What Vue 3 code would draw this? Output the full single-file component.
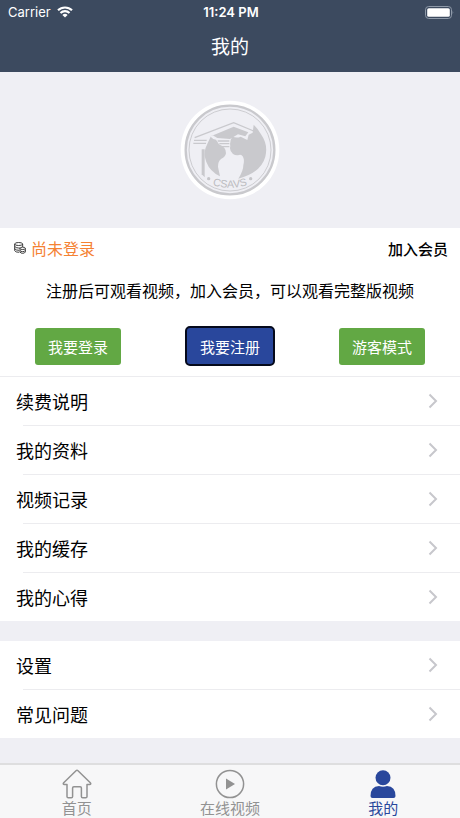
<script setup>
    import { ref } from 'vue'

    const accountItems = ['续费说明', '我的资料', '视频记录', '我的缓存', '我的心得']
    const systemItems = ['设置', '常见问题']
    const groups = [accountItems, systemItems]

    const tabs = [
        { id: 'home', label: '首页' },
        { id: 'video', label: '在线视频' },
        { id: 'mine', label: '我的' }
    ]
    const activeTab = ref('mine')
</script>

<template>
    <div class="page">
        <header class="header">
            <div class="status">
                <span class="carrier">
                    Carrier
                    <svg class="wifi" viewBox="0 0 16 12" aria-hidden="true">
                        <path d="M1 4.3a10 10 0 0 1 14 0M3.5 7a6.400 6.400 0 0 1 9 0" fill="none" stroke="#fff" stroke-width="2.100" />
                        <path d="M8 11.600 5.400 9a3.700 3.700 0 0 1 5.200 0z" fill="#fff" />
                    </svg>
                </span>
                <span class="time">11:24 PM</span>
                <svg class="battery" viewBox="0 0 29 13" aria-hidden="true">
                    <rect x="0.500" y="0.500" width="26" height="12" rx="3.200" fill="none" stroke="#8e99a8" />
                    <rect x="2.200" y="2.200" width="22.600" height="8.600" rx="1.600" fill="#fff" />
                    <path d="M27.600 4.600q1.400 1.900 0 3.800z" fill="#8e99a8" />
                </svg>
            </div>
            <h1 class="title">我的</h1>
        </header>

        <section class="banner">
            <svg class="emblem" viewBox="30 28 300 300" role="img" aria-label="CSAVS">
                <circle cx="180" cy="178" r="148" fill="#fff" />
                <circle cx="180" cy="178" r="133" fill="#efeff4" stroke="#c9c9cd" stroke-width="7" />
                <circle cx="180" cy="178" r="123" fill="none" stroke="#cdcdd1" stroke-width="3" />
                <path d="M74 141 191 96l60 25" fill="none" stroke="#c9c9cd" stroke-width="4" />
                <path d="M117 139 191 108l44 17-9 12-22-6-24 14-38-3-14-8z" fill="#c9c9cd" />
                <path d="M72 149h38M70 158h38M143 151h35M148 159h30M152 168h26" stroke="#c9c9cd" stroke-width="4" />
                <path d="M95 176h9v84l-9-9z" fill="#c9c9cd" />
                <path d="M122 138q6 8 16 9l9 14q22 9 21 27-2 12-14 16-11 8-10 25l6 28q-30-14-41-43-9-24-2-43 8-19 15-33z" fill="#c9c9cd" />
                <path d="M187 137q12 7 25 1l20 10 4-16 12-6 3-24q13 12 22 29 22 31 13 67-13 48-81 66 15-23 15-40 4-16-1-26-5-8-12-5-10 2-18-3-12-10-8-24-3-13 6-29z" fill="#c9c9cd" />
                <path id="emblem-arc" d="M100 273q80 36 160 0" fill="none" />
                <text class="emblem-text"><textPath href="#emblem-arc" startOffset="50%" text-anchor="middle">CSAVS</textPath></text>
                <circle cx="116" cy="264" r="5" fill="#c5c5c9" />
                <circle cx="242" cy="264" r="5" fill="#c5c5c9" />
            </svg>
        </section>

        <section class="member">
            <div class="member-row">
                <span class="login-state">
                    <svg class="coins" viewBox="0 0 36 36" fill="none" stroke="#333" stroke-width="2.800" aria-hidden="true">
                        <ellipse cx="14" cy="6" rx="12" ry="4.500" />
                        <path d="M2 6v20q2 5 14 5M26 6v9M2 13q3 5 12 5h4M2 20q3 5 13 5" />
                        <ellipse cx="26" cy="19" rx="8" ry="3.500" />
                        <path d="M18 19v11q2 4 8 4t8-4V19M18 25q2 4 8 4t8-4" />
                    </svg>
                    尚未登录
                </span>
                <a class="join" href="#">加入会员</a>
            </div>
            <p class="notice">注册后可观看视频&#xFF0C;加入会员&#xFF0C;可以观看完整版视频</p>
            <div class="actions">
                <button type="button" class="action">我要登录</button>
                <button type="button" class="action register">我要注册</button>
                <button type="button" class="action">游客模式</button>
            </div>
        </section>

        <ul v-for="(items, index) in groups" :key="index" class="menu">
            <li v-for="item in items" :key="item">
                <a href="#" class="menu-link">
                    {{ item }}
                    <svg class="arrow" viewBox="0 0 10 16" aria-hidden="true">
                        <path d="m1.500 1.500 6.500 6.500-6.500 6.500" fill="none" stroke="#c7c7cc" stroke-width="2" />
                    </svg>
                </a>
            </li>
        </ul>

        <nav class="tabbar">
            <button
                v-for="tab in tabs"
                :key="tab.id"
                type="button"
                class="tab"
                :class="{ active: activeTab === tab.id }"
                @click="activeTab = tab.id"
            >
                <svg v-if="tab.id === 'home'" class="tab-icon" viewBox="0 0 30 30" fill="none" stroke="currentColor" stroke-width="1.500" stroke-linejoin="round" aria-hidden="true">
                    <path d="M14 1.700q1-.900 2 0l12.300 12q1.200 1.500-.800 1.800H25v12q0 1.300-1.300 1.300h-3q-1.300 0-1.300-1.300V19q0-1.300-1.300-1.300h-6.200q-1.300 0-1.300 1.300v8.500q0 1.300-1.300 1.300h-3Q5 28.800 5 27.500v-12H2.500q-2-.300-.800-1.800z" />
                </svg>
                <svg v-else-if="tab.id === 'video'" class="tab-icon" viewBox="0 0 30 30" aria-hidden="true">
                    <circle cx="15" cy="15" r="13.600" fill="none" stroke="currentColor" stroke-width="1.500" />
                    <path d="M11 9.500v11l9-5.500z" fill="currentColor" />
                </svg>
                <svg v-else class="tab-icon" viewBox="0 0 30 30" fill="currentColor" aria-hidden="true">
                    <circle cx="15" cy="8.800" r="7.500" />
                    <path d="M4.500 29q-2 0-2-2 0-9.500 8.500-10 4 1.600 8 0 8.500.500 8.500 10 0 2-2 2z" />
                </svg>
                <span>{{ tab.label }}</span>
            </button>
        </nav>
    </div>
</template>

<style>
    body {
        background: #efeff4;
    }
</style>

<style scoped>
    .page {
        min-height: 100vh;
        display: flex;
        flex-direction: column;
        background: #efeff4;
        color: #000;
        font-family: Inter, "Noto Sans CJK SC", sans-serif;
    }
    .page a {
        color: inherit;
        text-decoration: none;
    }
    .page button {
        font-family: inherit;
        cursor: pointer;
    }

    /* Sidhuvud */
    .header {
        background: #3c4a5f;
        color: #fff;
    }
    .status {
        display: grid;
        grid-template-columns: 1fr auto 1fr;
        align-items: center;
        height: 24px;
        padding: 0 6px 0 8px;
        font-size: 13px;
    }
    .carrier {
        display: flex;
        align-items: center;
        gap: 6px;
    }
    .wifi {
        width: 16px;
        height: 12px;
    }
    .time {
        font-weight: 600;
    }
    .battery {
        width: 29px;
        height: 13px;
        justify-self: end;
    }
    .title {
        margin: 0;
        font-size: 19px;
        font-weight: 400;
        line-height: 48px;
        text-align: center;
    }

    /* Emblem */
    .banner {
        display: flex;
        justify-content: center;
        padding: 28px 0;
    }
    .emblem {
        width: 100px;
        height: 100px;
    }
    .emblem-text {
        font-family: "Liberation Sans", sans-serif;
        font-size: 32px;
        fill: #bcbcc0;
    }

    /* Medlemskap */
    .member {
        background: #fff;
        border-bottom: 1px solid #ececef;
    }
    .member-row {
        display: flex;
        justify-content: space-between;
        align-items: center;
        height: 40px;
        padding: 0 12px 0 14px;
    }
    .login-state {
        display: flex;
        align-items: center;
        gap: 5px;
        color: #f58233;
        font-size: 16px;
    }
    .coins {
        width: 12px;
        height: 12px;
    }
    .join {
        font-size: 15px;
        font-weight: 500;
    }
    .notice {
        margin: 0;
        padding: 11px 0;
        font-size: 16px;
        line-height: 24px;
        text-align: center;
    }
    .actions {
        display: flex;
        justify-content: space-between;
        align-items: center;
        padding: 12px 35px 10px;
    }
    .action {
        height: 37px;
        padding: 0 13px;
        border: none;
        border-radius: 3px;
        background: #62a844;
        color: #fff;
        font-size: 15px;
    }
    .register {
        height: 40px;
        border: 2px solid #050a1c;
        border-radius: 5px;
        background: #29479c;
    }

    /* Menylistor */
    .menu {
        margin: 0 0 20px;
        padding: 0;
        background: #fff;
        list-style: none;
    }
    .menu li + li::before {
        content: "";
        display: block;
        height: 1px;
        margin-left: 23px;
        background: #ececef;
    }
    .menu-link {
        display: flex;
        justify-content: space-between;
        align-items: center;
        height: 48px;
        padding: 0 22px 0 16px;
        font-size: 18px;
    }
    .arrow {
        width: 10px;
        height: 16px;
    }

    /* Flikrad */
    .tabbar {
        position: sticky;
        bottom: 0;
        display: flex;
        margin-top: auto;
        border-top: 2px solid #dededf;
        background: #f7f7f8;
    }
    .tab {
        flex: 1;
        display: flex;
        flex-direction: column;
        align-items: center;
        padding: 4px 0 0;
        border: none;
        background: none;
        color: #929292;
        font-size: 15px;
        line-height: 19px;
    }
    .tab.active {
        color: #29479c;
    }
    .tab-icon {
        width: 30px;
        height: 30px;
    }
</style>
